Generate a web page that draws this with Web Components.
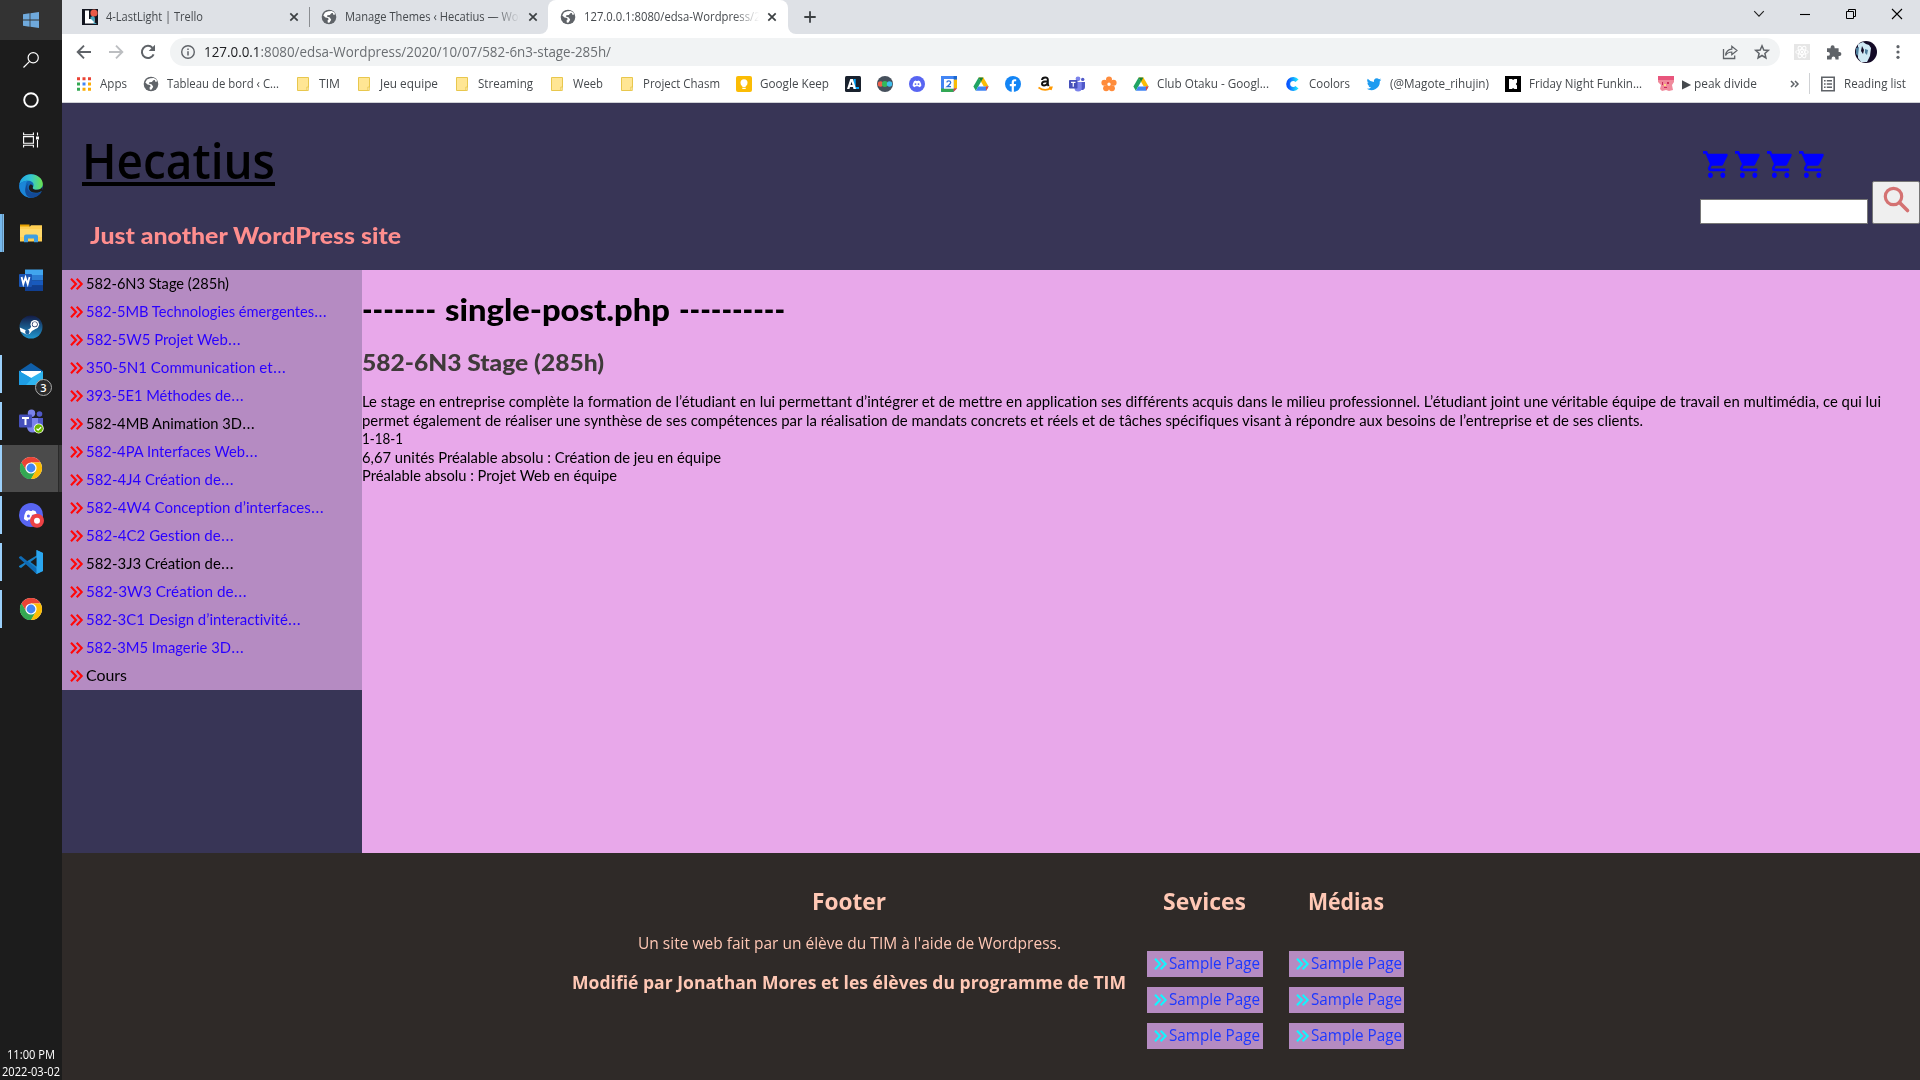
<!DOCTYPE html>
<html lang="fr">
<head>
<meta charset="utf-8">
<title>582-6N3 Stage (285h)</title>
<style>
html,body{margin:0;padding:0;width:1920px;height:1080px;overflow:hidden;background:#2f2a28}
body{font-family:"Open Sans","Noto Sans",sans-serif}
</style>
</head>
<body>
<desk-screen></desk-screen>
<script>
const define = (name, html, ready) => customElements.define(name, class extends HTMLElement {
  constructor(){
    super();
    const t = document.createElement('template');
    t.innerHTML = html;
    this.attachShadow({mode:'open'}).append(t.content.cloneNode(true));
  }
  connectedCallback(){ if (ready) ready.call(this, this.shadowRoot); }
});

/* Text run stretched to an exact advance width (attribute w). */
define('fit-text', `<style>
:host{display:block;white-space:nowrap;flex:none}
span{display:inline-block;transform-origin:0 50%;white-space:nowrap;text-decoration:inherit}
</style><span><slot></slot></span>`, function(root){
  const w = +this.getAttribute('w');
  if (!w) return;
  this.style.width = w + 'px';
  const s = root.querySelector('span');
  const n = s.offsetWidth ? s.getBoundingClientRect().width : 0;
  if (n) s.style.transform = `scaleX(${(w / n).toFixed(4)})`;
});

const chrome = `<circle cx="12" cy="12" r="11" fill="#fff"/><path d="M12 12 2.47 6.5A11 11 0 0 1 21.53 6.5L12 6.5Z" fill="#ea4335"/><path d="M2.47 6.5A11 11 0 0 0 12 23L16.8 14.7 12 17.5 7.2 14.8Z" fill="#34a853"/><path d="M2.47 6.5 7.2 14.8 12 12V6.5Z" fill="#ea4335"/><path d="M2.47 6.5 7.2 14.8 12 17.5 16.8 14.7 12 23A11 11 0 0 1 2.47 6.5Z" fill="#34a853"/><path d="M12 6.5H21.53A11 11 0 0 1 12 23L16.8 14.7Z" fill="#fbbc04"/><circle cx="12" cy="12" r="5.6" fill="#fff"/><circle cx="12" cy="12" r="4.4" fill="#4285f4"/>`;
const globe = `<circle cx="8" cy="8" r="7.3" fill="#5f6368"/><path d="M7.2 2.2 4 3.6 2.3 6.4 4.5 8.6l2.7.3.3 1.8-1 .8.4 2.2 1.7-.2 1.6-2.7-1.4-2.3-3-1 .6-1.3 2.5-.3 1.3-1.6 1.7-.2.4 1.6 2-.1-1-2.2L10.700 2z" fill="#fff"/>`;
const drive = `<path d="M5.6 1.500h4.800L15.600 10.500H10.800z" fill="#fbbc04"/><path d="M5.600 1.500 8 5.700 2.800 14.700.4 10.500z" fill="#1fa463"/><path d="M5.200 10.500H15.600L13.200 14.700H2.800z" fill="#4285f4"/><path d="m12.800 10.500h2.800l-2.400 4.200z" fill="#ea4335"/><path d="M5.600 1.500h4.800L8 5.700z" fill="#188038"/>`;
const discordFace = `<path d="M5 5.200Q6.200 4.500 7 4.500l.3.500h1.400l.3-.5q.8 0 2 .7 1.400 2.400 1.300 4.800-1 .9-2.300 1.200l-.6-.9H6.600l-.6.9Q4.700 10.900 3.700 10 3.600 7.600 5 5.200z" fill="#fff"/><circle cx="6.500" cy="8.100" r=".95" fill="#5865f2"/><circle cx="9.500" cy="8.100" r=".95" fill="#5865f2"/>`;
const ICONS = {
  windows:[16,16,`<path d="M0 2.300 6.600 1.300V7.600H0zM7.400 1.200 16 0V7.600H7.400zM0 8.400H6.600V14.700L0 13.700zM7.400 8.400H16V16L7.400 14.800z" fill="#6fa9dc"/>`],
  search:[16,16,`<g fill="none" stroke="#fff" stroke-width="1.200"><circle cx="10.200" cy="5.800" r="5.100"/><path d="M6.600 9.400.5 15.500"/></g>`],
  cortana:[16,16,`<circle cx="8" cy="8" r="6.800" fill="none" stroke="#fff" stroke-width="1.900"/>`],
  taskview:[16,16,`<g fill="none" stroke="#fff" stroke-width="1.100"><path d="M.6.500V2.800H10.400V.5M.6 15.500V13.200H10.400V15.500M.6 5V11.200M10.400 5V11.200M0 4.600H11M0 11.200H11M14.500.5V3.500M14.500 8V15.500"/></g><path d="M13 4.500h3v3h-3z" fill="#fff"/>`],
  edge:[24,24,`<defs><linearGradient id="a" x1="0" x2="1"><stop stop-color="#1fa2e6"/><stop offset=".5" stop-color="#36c8d0"/><stop offset="1" stop-color="#6be24b"/></linearGradient></defs><circle cx="12" cy="12" r="11.800" fill="#1267b8"/><path d="M.3 11C1 4.500 6 .2 12 .2c6.500 0 11.800 4.500 11.800 9.800 0 3.500-2.700 5.800-5.800 5.800-3 0-4.400-1-4.400-1.800 0-.6 1-1 1-3 0-2.400-2.200-4.200-5.600-4.200C5 6.800 1.500 8.600.3 11z" fill="url(#a)"/><path d="M.3 11C2 7.800 6 6.700 9 6.800 7 8 6 11 7 14.500c1 4 4.500 6.800 8.500 6.800-1.700 1.300-3 2.400-6 2.200C4 22.300-.3 17 .3 11z" fill="#1b86d8"/><path d="M9.200 9.500c-2 3-.5 7.500 3.300 9 4 1.500 8 .6 10-.8-1.600 3.300-6 6.300-10.500 6-5-.6-6.600-6-5.500-10 .5-2 1.400-3.300 2.700-4.200z" fill="#124a98"/><path d="M13.600 14c0 .8 1.400 1.800 4.400 1.800 2.500 0 4.500-1 5.400-3l-.2 4c-4 3-11.200 2.700-13-1.300-.7-1.700-.4-3.700 1.100-5 2 0 3.500 1.300 2.300 3.500z" fill="#1c1c1c"/>`],
  explorer:[24,24,`<path d="M1 3.500h9.500V7H1z" fill="#e8a200"/><path d="M1 5.500H11l1-1.300H23V20.500H1z" fill="#ffcf53"/><path d="M1 8h22v8H1z" fill="#ffd96b"/><path d="M5 21.300V15.500a2 2 0 0 1 2-2H17a2 2 0 0 1 2 2v5.800H15V17.500H9v3.800z" fill="#3f9ee0"/>`],
  word:[24,24,`<path d="M6 1.500H24V7H6z" fill="#41a5ee"/><path d="M6 7H24v5.500H6z" fill="#2b7cd3"/><path d="M6 12.300H24v5.400H6z" fill="#185abd"/><path d="M6 17.500H24V23H6z" fill="#103f91"/><rect y="6" width="13" height="13" rx="1" fill="#1a55b4"/><path d="m2.600 9 1.700 7 2.200-6.600L8.700 16l1.800-7" fill="none" stroke="#fff" stroke-width="1.800"/>`],
  steam:[24,24,`<defs><linearGradient id="s" x2="0" y2="1"><stop stop-color="#141b45"/><stop offset="1" stop-color="#2096cf"/></linearGradient></defs><circle cx="12" cy="12" r="11.500" fill="url(#s)"/><path d="M.8 12.500 7.500 15.500 11 13.500 14 9l5 3.500-6 3.500-2.500 3L7 19.300 1.500 16.500z" fill="#fff"/><circle cx="15.800" cy="9.300" r="4.300" fill="#fff"/><circle cx="15.800" cy="9.300" r="2.900" fill="#1b2e60"/><circle cx="15.800" cy="9.300" r="2.200" fill="#fff"/><circle cx="8.300" cy="17" r="2.200" fill="#1d5c96"/>`],
  mail:[24,24,`<path d="M0 9 12 1 24 9v3H0z" fill="#0f5ea8"/><path d="M2 9h20v9H2z" fill="#fff"/><path d="M0 9 12 16 24 9V23H0z" fill="#2fb5f0"/><path d="M0 23V9L13 16.500 7 23z" fill="#1e9de4"/>`],
  teams:[24,24,`<circle cx="12.500" cy="4.200" r="3.700" fill="#7b83eb"/><circle cx="20.500" cy="5" r="2.800" fill="#5059c9"/><path d="M17 9h7v7.500a4.500 4.500 0 0 1-7 3.500z" fill="#5059c9"/><path d="M8 9H19v9a5.500 5.500 0 0 1-11 0z" fill="#7b83eb"/><rect y="5.500" width="13" height="13" rx="1" fill="#4650bb"/><path d="M3 9h7M6.500 9v7" stroke="#fff" stroke-width="2"/><circle cx="19.700" cy="19.500" r="5" fill="#fff"/><circle cx="19.700" cy="19.500" r="4.200" fill="#6bb700"/><path d="m17.500 19.600 1.600 1.600 3-3" fill="none" stroke="#fff" stroke-width="1.300"/>`],
  chrome:[24,24,chrome],
  discord:[24,24,`<circle cx="12" cy="12" r="12" fill="#5865f2"/><g transform="translate(-1 0) scale(1.600)">${discordFace}</g><circle cx="18" cy="17.800" r="7" fill="#ed4245"/><circle cx="18" cy="17.800" r="3" fill="#fff"/>`],
  vscode:[24,24,`<path d="M17.500 0 24 3V21L17.500 24 7 14 2 18 0 17V16L17.500 5.500z" fill="#1780c4"/><path d="M0 7 2 6l16 13v5L0 8z" fill="#0f6bb5"/><path d="M17.500 0 24 3V21L17.500 24z" fill="#2ba7f0"/><path d="M17.500 7.500v9L11.500 12z" fill="#1c1c1c"/>`],
  globe:[16,16,globe],
  lastlight:[16,16,`<path d="M0 0h16v16H0z" fill="#12151f"/><path d="M3 1.500h4V10h5.500v4.500H3z" fill="#fff"/><path d="M8 9l3-3 2 3-1 4zM12 13l3 2h-4z" fill="#49a5bd"/><circle cx="12" cy="4" r="3.600" fill="#eb5a46"/>`],
  x:[16,16,`<path d="m4.300 4.300 7.400 7.400m0-7.400-7.400 7.400" stroke="#3c4043" stroke-width="1.700"/>`],
  plus:[16,16,`<path d="M8 2.300v11.400M2.300 8h11.400" stroke="#3c4043" stroke-width="1.800"/>`],
  chev:[16,16,`<path d="m3.200 5.200 4.800 5 4.800-5" fill="none" stroke="#222" stroke-width="1.100"/>`],
  min:[16,16,`<path d="M3 8.500h10" stroke="#000" stroke-width="1.100"/>`],
  restore:[16,16,`<path d="M3.500 5.500h7v7h-7zM5.500 5.500v-2h7v7h-2" fill="none" stroke="#000"/>`],
  close:[16,16,`<path d="m3 3 10 10M13 3 3 13" stroke="#000" stroke-width="1.100"/>`],
  back:[16,16,`<path d="M15 8H2M8 1.700 1.700 8 8 14.300" fill="none" stroke="#5f6368" stroke-width="1.900"/>`],
  fwd:[16,16,`<path d="M1 8h13M8 1.700 14.300 8 8 14.300" fill="none" stroke="#bcbec1" stroke-width="1.900"/>`],
  reload:[16,16,`<path d="M13.600 10.300A6.100 6.100 0 1 1 12.500 3.800" fill="none" stroke="#5f6368" stroke-width="2"/><path d="M15 .7V7H8.700z" fill="#5f6368"/>`],
  info:[16,16,`<circle cx="8" cy="8" r="6.300" fill="none" stroke="#5f6368" stroke-width="1.400"/><path d="M8 7.200v4.200M8 4.400v1.500" stroke="#5f6368" stroke-width="1.500"/>`],
  share:[16,16,`<path d="M1.500 5v9.500h11.200V11.500" fill="none" stroke="#5f6368" stroke-width="1.300"/><path d="M3.600 11.500C4 7.600 6 5.500 9.800 5.200V2.200L15 6.500 9.800 10.700V8C7 8 5 9.200 3.600 11.500z" fill="none" stroke="#5f6368" stroke-width="1.200"/>`],
  star:[16,16,`<path d="m8 1.800 1.800 4.200 4.500.4-3.400 3 1 4.500L8 11.500l-3.900 2.400 1-4.500-3.400-3L6.200 6z" fill="none" stroke="#5f6368" stroke-width="1.500"/>`],
  react:[16,16,`<path d="M0 0h16v16H0z" fill="#e6e6e6"/><g fill="none" stroke="#fff"><ellipse cx="8" cy="8" rx="6.300" ry="2.400"/><ellipse cx="8" cy="8" rx="6.300" ry="2.400" transform="rotate(60 8 8)"/><ellipse cx="8" cy="8" rx="6.300" ry="2.400" transform="rotate(120 8 8)"/></g><circle cx="8" cy="8" r="1.200" fill="#fff"/>`],
  puzzle:[16,16,`<path d="M1 4.200h3.600V3.200a2 2 0 0 1 4 0v1H12.600V8h.8a2 2 0 0 1 0 4h-.8v3.500H9.400v-1a1.900 1.900 0 0 0-3.800 0v1H1V11.800h1a1.900 1.900 0 0 0 0-3.800H1z" fill="#5f6368"/>`],
  avatar:[22,22,`<defs><clipPath id="c"><circle cx="11" cy="11" r="11"/></clipPath></defs><g clip-path="url(#c)"><path d="M0 0h22v22H0z" fill="#130a26"/><path d="M3 3 8 1l3 2 3 1 2 3-1 8-3 6H6L3 17l0-8z" fill="#cfe9f5"/><path d="M1 7l3-1-1 9-2-2zM10 8l3 1-1 5-2-2z" fill="#4e7f9d"/><path d="M7 5l2 4-1 4-2-3z" fill="#130a26"/></g>`],
  dots:[16,16,`<g fill="#5f6368"><circle cx="8" cy="2.700" r="1.600"/><circle cx="8" cy="8" r="1.600"/><circle cx="8" cy="13.300" r="1.600"/></g>`],
  apps:[16,16,`<g fill="#ea4335"><path d="M1 1.300h3v3H1zM6.500 1.300h3v3h-3zM12 1.300h3v3h-3z"/></g><path d="M1 6.500h3v3H1zM1 11.700h3v3H1z" fill="#34a853"/><path d="M6.500 6.500h3v3h-3z" fill="#4285f4"/><path d="M12 6.500h3v3h-3zM6.500 11.700h3v3h-3zM12 11.700h3v3h-3z" fill="#fbac04"/>`],
  folder:[16,16,`<path d="M2.500 1.500H13.500V11l-.7 1v2.500H2.500z" fill="#ffe694" stroke="#e8c74d"/><path d="M11.800 11h1.500v3.500h-1.500z" fill="#fff0b8" stroke="#e8c74d" stroke-width=".8"/>`],
  keep:[16,16,`<rect width="16" height="16" rx="2" fill="#fbbc04"/><circle cx="8" cy="6.800" r="3.500" fill="#fff"/><path d="M6.300 9h3.400v2H6.300zM6.300 11.700h3.400v1.200H6.300z" fill="#fff"/>`],
  anilist:[16,16,`<rect width="16" height="16" rx="1.500" fill="#19212d"/><path d="M8.500 3h2.200v8H14v2H8.500z" fill="#02a9ff"/><path fill-rule="evenodd" d="M2 13 5.300 3h2.600L11 13H8.600L8 11H5l-.6 2zM5.600 9h1.900L6.500 5.800z" fill="#fff"/>`],
  ovals:[16,16,`<circle cx="8" cy="8" r="8" fill="#46505c"/><circle cx="3.500" cy="8" r="2.700" fill="#f0604c"/><circle cx="7.800" cy="8" r="2.900" fill="#33b85a"/><circle cx="12.500" cy="8" r="2.700" fill="#3fc0f0"/>`],
  discordS:[16,16,`<circle cx="8" cy="8" r="8" fill="#5865f2"/>${discordFace}`],
  cal:[16,16,`<path d="M0 0h16v16H0z" fill="#4285f4"/><path d="M12.600 3.400H16V12.600H12.600z" fill="#fbbc04"/><path d="M0 12.600h12.600V16H1.500A1.500 1.500 0 0 1 0 14.500z" fill="#34a853"/><path d="M12.600 12.600H16L12.600 16z" fill="#ea4335"/><path d="M16 12.600V16H12.600z" fill="#fff"/><path d="M12.600 0H16V3.400H12.600z" fill="#1967d2"/><path d="M3 3h9.700v9.700H3z" fill="#fff"/><path d="M5.800 6.300Q6 4.800 7.800 4.800T9.700 6.500Q9.700 7.600 6 10.700H10" fill="none" stroke="#2a6fdb" stroke-width="1.300"/>`],
  drive:[16,16,drive],
  fb:[16,16,`<circle cx="8" cy="8" r="8" fill="#1385f5"/><path d="M6.700 16V10.300H4.800V8h1.900V6.300C6.700 4.200 8 3.200 9.600 3.200l1.600.1v2H10c-.8 0-1.100.4-1.100 1.100V8h2.200l-.4 2.300H8.900V16z" fill="#fff"/>`],
  amazon:[16,16,`<path d="M5 4Q5.300 1.500 8.200 1.500T10.800 4V8.500L11.700 10M10.700 5.200Q5 5 5 7.800 5 9.500 7 9.500 10.700 9.300 10.700 5.800" fill="none" stroke="#111" stroke-width="2"/><path d="M1.500 11.500Q8 16 14 12M12 11.300h2.800L13.800 14" fill="none" stroke="#f90" stroke-width="1.600"/>`],
  teamsS:[16,16,`<circle cx="9" cy="2.800" r="2.400" fill="#7b83eb"/><circle cx="13.700" cy="3.400" r="1.700" fill="#5059c9"/><path d="M12 6h4v5a3 3 0 0 1-4 2.800z" fill="#5059c9"/><path d="M5.500 6h7.200v6a3.600 3.600 0 0 1-7.200 0z" fill="#7b83eb"/><rect y="4" width="8.500" height="8.500" rx=".8" fill="#4650bb"/><path d="M2 6.300h4.500M4.250 6.300v4.500" stroke="#fff" stroke-width="1.200"/>`],
  flower:[16,16,`<g fill="#ff8c3c"><circle cx="8" cy="3.400" r="3"/><circle cx="12.600" cy="6.700" r="3"/><circle cx="10.900" cy="12.200" r="3"/><circle cx="5.100" cy="12.200" r="3"/><circle cx="3.400" cy="6.700" r="3"/></g><circle cx="8" cy="8.200" r="2.400" fill="#fff" stroke="#ff8c3c" stroke-width="1.400"/>`],
  coolors:[16,16,`<defs><linearGradient id="k" x2="1"><stop stop-color="#0a55ff"/><stop offset="1" stop-color="#1ce0ff"/></linearGradient></defs><path d="M12 4.800A5 5 0 1 0 12 11.200" fill="none" stroke="url(#k)" stroke-width="4"/>`],
  twitter:[16,16,`<path d="M15.300 3.700a6 6 0 0 1-1.700.5 3 3 0 0 0 1.300-1.700 6 6 0 0 1-1.900.7A3 3 0 0 0 7.900 6 8.500 8.500 0 0 1 1.700 2.800a3 3 0 0 0 .9 4 3 3 0 0 1-1.300-.4 3 3 0 0 0 2.400 3 3 3 0 0 1-1.400 0 3 3 0 0 0 2.800 2.100A6 6 0 0 1 .7 12.800 8.500 8.500 0 0 0 13.800 5.200a6 6 0 0 0 1.500-1.500z" fill="#1d9bf0"/>`],
  fnf:[16,16,`<path d="M0 0h16v16H0z" fill="#000"/><path d="M4 3h3l1 1 1.500-1H12v3.500L10.800 8 12 9.500V13H9.500L8 12 7 13H4z" fill="#fff"/>`],
  pink:[16,16,`<path d="M0 0h16v6l-2 3 1 5-4 1-3-1-4 1-2-2 1-4-3-3z" fill="#f08a9c"/><path d="M0 0h16v4H0z" fill="#e8557c"/><path d="M4 6h1v3H4zM9 6h2v2H9zM6 11h3v1H6z" fill="#c92e5c"/><path d="M6 8h2v2H6z" fill="#ffd980"/>`],
  list:[16,16,`<path d="M1.800 1.300h12.400v13.400H1.800z" fill="none" stroke="#5f6368" stroke-width="1.600"/><path d="M4 4.800h1.600M4 8h1.600M4 11.200h1.600M6.800 4.800H12M6.800 8H12M6.800 11.200H12" stroke="#5f6368" stroke-width="1.400"/>`],
  more:[16,16,`<path d="m4 5 3 3-3 3M8 5l3 3-3 3" fill="none" stroke="#5f6368" stroke-width="1.500"/>`],
  dbl:[13,12,`<path d="m1 .8 5 5.200-5 5.200M6.700.8l5 5.200-5 5.200" fill="none" stroke="currentColor" stroke-width="2.100"/>`],
  cart:[26,27,`<svg width="26" height="27" viewBox="1 2 21 20" preserveAspectRatio="none"><path d="M7 18c-1.100 0-1.990.9-1.990 2S5.900 22 7 22s2-.9 2-2-.9-2-2-2zM1 2v2h2l3.600 7.590-1.350 2.450c-.16.280-.25.610-.25.960 0 1.100.9 2 2 2h12v-2H7.420c-.14 0-.25-.11-.25-.25l.03-.12.900-1.630h7.450c.75 0 1.410-.41 1.750-1.030l3.580-6.490c.08-.14.12-.31.12-.48 0-.55-.45-1-1-1H5.210l-.94-2H1zm16 16c-1.100 0-1.990.9-1.990 2s.89 2 1.990 2 2-.9 2-2-.9-2-2-2z" fill="#00f"/></svg>`],
  loupe:[28,28,`<g fill="none" stroke="#d47272"><circle cx="10.500" cy="10.500" r="8.200" stroke-width="3.200"/><path d="m16.500 16.500 8 8" stroke-width="3.600" stroke-linecap="round"/></g>`],
};
define('ui-icon', `<style>:host{display:block;flex:none;line-height:0}</style>`, function(root){
  const icon = ICONS[this.getAttribute('n')];
  if (!icon || root.querySelector('div')) return;
  const [w,h,body] = icon;
  const d = document.createElement('div');
  d.innerHTML = `<svg width="${w}" height="${h}" viewBox="0 0 ${w} ${h}" style="display:block;overflow:visible">${body}</svg>`;
  root.append(d);
});

define('task-item', `<style>
:host{display:flex;box-sizing:border-box;position:relative;align-items:center;justify-content:center;height:47px;width:62px;padding-bottom:2px;flex:none}
:host([small]){height:40px;padding-bottom:0}
:host([start]){background:#333}
:host([active]){background:linear-gradient(90deg,#4b4b4b 0 58px,#2a2a2a 58px 59px,#3a3a3a 59px)}
i{position:absolute;left:0;top:4px;width:2px;height:38px;background:#9bd0fb;display:none}
:host([open]) i{display:block}
:host([multi]) i{width:4px;background:linear-gradient(90deg,#76b9ed 0 2px,#5f91b9 2px 3px,#82bce8 3px)}
:host([active]) i{top:0;height:47px}
b{position:absolute;left:35px;top:28px;width:15px;height:15px;border-radius:50%;background:#2b2b2b;border:1px solid #aaa;color:#fff;font:600 11px/15px "Open Sans",sans-serif;text-align:center}
b:empty{display:none}
</style><i></i><ui-icon></ui-icon><b></b>`, function(root){
  const old = root.querySelector('ui-icon'), ic = document.createElement('ui-icon');
  ic.setAttribute('n', this.getAttribute('icon'));
  old.replaceWith(ic);
  root.querySelector('b').textContent = this.getAttribute('badge') || '';
});

define('task-bar', `<style>
:host{display:flex;flex-direction:column;width:62px;height:1080px;background:#1c1c1c;flex:none}
.g{height:3px;flex:none}.f{flex:1}
.c{display:flex;flex-direction:column;align-items:center;color:#fff;font:12px/17px "Open Sans",sans-serif}
</style>
<task-item small start icon="windows"></task-item><task-item small icon="search"></task-item><task-item small icon="cortana"></task-item><task-item small icon="taskview"></task-item>
<div class="g"></div>
<task-item icon="edge"></task-item><task-item open multi icon="explorer"></task-item><task-item icon="word"></task-item><task-item icon="steam"></task-item>
<task-item open icon="mail" badge="3"></task-item><task-item open icon="teams"></task-item><task-item open active icon="chrome"></task-item>
<task-item open icon="discord"></task-item><task-item open icon="vscode"></task-item><task-item open icon="chrome"></task-item>
<div class="f"></div>
<div class="c"><fit-text w="48">11:00 PM</fit-text><fit-text w="58">2022-03-02</fit-text></div>`);

define('browser-tab', `<style>
:host{display:flex;align-items:center;height:34px;box-sizing:border-box;color:#45494d;font-size:12px;line-height:16px;flex:none}
.t{margin-left:8px;overflow:hidden;flex:none}
:host([fade]) .t{-webkit-mask-image:linear-gradient(90deg,#000 calc(100% - 26px),transparent)}
ui-icon:last-child{margin-left:auto}
:host([on]){background:#fff;border-radius:8px 8px 0 0}
</style><ui-icon></ui-icon><div class="t"><slot></slot></div><ui-icon n="x"></ui-icon>`, function(root){
  const ic = document.createElement('ui-icon'); ic.setAttribute('n', this.getAttribute('icon'));
  root.querySelector('ui-icon').replaceWith(ic);
  root.querySelector('.t').style.width = this.getAttribute('tw') + 'px';
});

define('tab-strip', `<style>
:host{display:flex;height:34px;background:#dee1e6;flex:none}
.l{flex:none;width:486px;display:flex;align-items:center;background:#dee1e6;border-bottom-right-radius:8px}
.w{background:linear-gradient(#dee1e6 50%,#fff 50%);display:flex}
.s{width:1px;height:20px;background:#8a8d91;flex:none}
.r{flex:1;display:flex;background:#dee1e6;border-bottom-left-radius:8px;align-items:center}
.r ui-icon:first-child{margin-left:14px}
.c{margin-left:auto;margin-right:15px;display:flex;gap:30px;padding-bottom:6px}
.a{padding:0 7px 0 20px;width:247px}.b{padding:0 7px 0 11px;width:238px}.d{padding:0 8px 0 12px;width:240px}
</style>
<div class="w"><div class="l">
<browser-tab class="a" icon="lastlight" tw="160"><fit-text w="97">4-LastLight | Trello</fit-text></browser-tab><div class="s"></div>
<browser-tab class="b" icon="globe" tw="175" fade><fit-text w="213">Manage Themes ‹ Hecatius — WordPress</fit-text></browser-tab></div>
<browser-tab class="d" on icon="globe" tw="175" fade><fit-text w="196">127.0.0.1:8080/edsa-Wordpress/2020</fit-text></browser-tab></div>
<div class="w" style="flex:1"><div class="r"><ui-icon n="plus"></ui-icon><div class="c"><ui-icon n="chev"></ui-icon><ui-icon n="min"></ui-icon><ui-icon n="restore"></ui-icon><ui-icon n="close"></ui-icon></div></div></div>`);

define('tool-bar', `<style>
:host{display:flex;align-items:center;height:36px;background:#fff;flex:none;padding-left:14px;gap:16px;box-sizing:border-box}
.p{display:flex;align-items:center;width:1610px;height:28px;border-radius:14px;background:#f1f3f4;box-sizing:border-box;padding:0 10px;margin-left:-2px;font-size:14px;line-height:20px;color:#6a6e72}
.p fit-text{margin-left:8px}.p em{font-style:normal;color:#202124}
.e{display:flex;gap:16px;margin-left:auto}
.x{display:flex;align-items:center;gap:13px;margin-left:-2px}
</style>
<ui-icon n="back"></ui-icon><ui-icon n="fwd"></ui-icon><ui-icon n="reload"></ui-icon>
<div class="p"><ui-icon n="info"></ui-icon><fit-text w="407"><em>127.0.0.1</em>:8080/edsa-Wordpress/2020/10/07/582-6n3-stage-285h/</fit-text><div class="e"><ui-icon n="share"></ui-icon><ui-icon n="star"></ui-icon></div></div>
<div class="x"><ui-icon n="react"></ui-icon><ui-icon n="puzzle" style="margin-left:3px"></ui-icon><ui-icon n="avatar"></ui-icon><ui-icon n="dots"></ui-icon></div>`);

define('book-mark', `<style>:host{display:flex;align-items:center;gap:8px;flex:none}</style><slot></slot>`);
const bm = (n,t,w) => `<book-mark><ui-icon n="${n}"></ui-icon>${t?`<fit-text w="${w}">${t}</fit-text>`:''}</book-mark>`;
define('bookmark-bar', `<style>
:host{display:flex;align-items:center;height:33px;background:#fff;border-bottom:1px solid #cfd1d6;box-sizing:border-box;padding:0 14px 5px 14px;gap:16px;font-size:12px;line-height:16px;color:#45494d;flex:none}
.e{margin-left:auto;display:flex;align-items:center;gap:10px}.s{width:1px;height:21px;background:#cfd1d4;margin-left:-4px}
</style>
${bm('apps','Apps',27)}${bm('globe','Tableau de bord ‹ C...',112)}${bm('folder','TIM',21)}${bm('folder','Jeu equipe',58)}${bm('folder','Streaming',55)}${bm('folder','Weeb',30)}${bm('folder','Project Chasm',77)}${bm('keep','Google Keep',69)}
${['anilist','ovals','discordS','cal','drive','fb','amazon','teamsS','flower'].map(n=>bm(n)).join('')}
${bm('drive','Club Otaku - Googl...',112)}${bm('coolors','Coolors',41)}${bm('twitter','(@Magote_rihujin)',99)}${bm('fnf','Friday Night Funkin...',113)}${bm('pink','▶ peak divide',75)}
<div class="e"><ui-icon n="more"></ui-icon><div class="s"></div><book-mark><ui-icon n="list"></ui-icon><fit-text w="62">Reading list</fit-text></book-mark></div>`);

define('site-header', `<style>
:host{display:flex;justify-content:space-between;height:167px;background:#383556;box-sizing:border-box;flex:none}
.t{padding:30px 0 0 20px}
.h{font:600 48px/56px "Open Sans",sans-serif;color:#000;text-decoration:underline 4px;text-underline-offset:3px;text-decoration-skip-ink:none}
.s{font:900 23px/30px Lato,sans-serif;color:#ff8e8e;margin:31px 0 0 8px}
.r{width:220px;padding-top:48px}
.c{display:flex;gap:6px;padding-left:3px}
.f{display:flex;align-items:flex-end;gap:4px;margin-top:3px}
.i{width:168px;height:25px;background:#fff;border:1px solid #767676;box-sizing:border-box}
.b{width:48px;height:43px;background:#efefef;border:1px solid #767676;border-radius:2px;box-sizing:border-box;padding:4px 0 0 10px}
</style>
<div class="t"><fit-text class="h" w="193">Hecatius</fit-text><fit-text class="s" w="311">Just another WordPress site</fit-text></div>
<div class="r"><div class="c">${'<ui-icon n="cart"></ui-icon>'.repeat(4)}</div><div class="f"><div class="i"></div><div class="b"><ui-icon n="loupe"></ui-icon></div></div></div>`);

define('course-link', `<style>
:host{display:flex;align-items:center;height:28px;padding:0 0 2px 8px;box-sizing:border-box;font:15px/26px Lato,sans-serif;font-variant-ligatures:none;color:#2a00ff}
:host([cur]){color:#000}
ui-icon{color:#ff0808;margin:1px 3px 0 0}
</style><ui-icon n="dbl"></ui-icon><slot></slot>`);
const courses = [['582-6N3 Stage (285h)',143,1],['582-5MB Technologies émergentes…',241],['582-5W5 Projet Web…',155],['350-5N1 Communication et…',200],['393-5E1 Méthodes de…',158],['582-4MB Animation 3D…',169,1],['582-4PA Interfaces Web…',172],['582-4J4 Création de…',148],['582-4W4 Conception d’interfaces…',238],['582-4C2 Gestion de…',148],['582-3J3 Création de…',148,1],['582-3W3 Création de…',161],['582-3C1 Design d’interactivité…',215],['582-3M5 Imagerie 3D…',158],['Cours',41,1]];
const dots = t => t.replace('…','<span style="font-family:Open Sans,sans-serif;font-size:17px;line-height:0">…</span>');
define('course-menu', `<style>:host{display:block;width:300px;background:#383556;flex:none}div{background:#b58bc2;height:420px}</style>
<div>${courses.map(([t,w,c])=>`<course-link ${c?'cur':''}><fit-text w="${w}">${dots(t)}</fit-text></course-link>`).join('')}</div>`);

define('post-article', `<style>
:host{display:block;flex:1;background:#e8a8ea;padding-top:21px;box-sizing:border-box;font-family:Lato,sans-serif;font-variant-ligatures:none;color:#000}
.h{display:flex;gap:9px;font-weight:900;font-size:30px;line-height:36px}
.t{font-weight:900;font-size:23px;line-height:28px;color:#3f3a3a;margin-top:21px}
.p{font-size:15px;line-height:18.5px;margin-top:16px}
</style>
<div class="h"><fit-text w="74">-------</fit-text><fit-text w="225">single-post.php</fit-text><fit-text w="106">----------</fit-text></div>
<fit-text class="t" w="242">582-6N3 Stage (285h)</fit-text>
<div class="p"><fit-text w="1519">Le stage en entreprise complète la formation de l’étudiant en lui permettant d’intégrer et de mettre en application ses différents acquis dans le milieu professionnel. L’étudiant joint une véritable équipe de travail en multimédia, ce qui lui</fit-text>
<fit-text w="1281">permet également de réaliser une synthèse de ses compétences par la réalisation de mandats concrets et réels et de tâches spécifiques visant à répondre aux besoins de l’entreprise et de ses clients.</fit-text>
<fit-text w="41">1-18-1</fit-text><fit-text w="359">6,67 unités Préalable absolu : Création de jeu en équipe</fit-text><fit-text w="255">Préalable absolu : Projet Web en équipe</fit-text></div>`);

define('page-link', `<style>
:host{display:flex;align-items:center;height:26px;background:#b58bc2;box-sizing:border-box;padding:0 0 2px 7px;font:16px/22px "Open Sans",sans-serif;color:#1c38ff}
ui-icon{color:#14f5ff;margin:1px 2px 0 0}
</style><ui-icon n="dbl"></ui-icon><fit-text w="91">Sample Page</fit-text>`);
define('link-column', `<style>
:host{display:flex;flex-direction:column;align-items:stretch;flex:none}
.h{display:flex;justify-content:center;font-weight:700;font-size:24px;line-height:28px;margin-bottom:36px;padding-right:2px}
.l{display:flex;flex-direction:column;gap:10px}
</style><div class="h"><slot></slot></div><div class="l"><page-link></page-link><page-link></page-link><page-link></page-link></div>`);
define('site-footer', `<style>
:host{display:flex;height:227px;background:#2f2a28;color:#ffc8b5;padding:34px 0 0 509px;box-sizing:border-box;flex:none;font-family:"Open Sans",sans-serif}
.m{width:556px;display:flex;flex-direction:column;align-items:center;margin-right:20px;flex:none}
.h{font-weight:700;font-size:24px;line-height:28px}
.p{font-size:16px;line-height:20px;margin-top:18px}
.b{font-weight:700;font-size:18.500px;line-height:24px;margin-top:17px}
.c1{width:116px;margin-right:26px}.c2{width:115px}
</style>
<div class="m"><fit-text class="h" w="74">Footer</fit-text><fit-text class="p" w="423">Un site web fait par un élève du TIM à l'aide de Wordpress.</fit-text><fit-text class="b" w="554">Modifié par Jonathan Mores et les élèves du programme de TIM</fit-text></div>
<link-column class="c1"><fit-text w="83">Sevices</fit-text></link-column><link-column class="c2"><fit-text w="76">Médias</fit-text></link-column>`);

define('desk-screen', `<style>
:host{display:flex;width:1920px;height:1080px;overflow:hidden}
.w{display:flex;flex-direction:column;width:1858px;flex:none}
.m{display:flex;height:583px;flex:none}
</style><task-bar></task-bar>
<div class="w"><tab-strip></tab-strip><tool-bar></tool-bar><bookmark-bar></bookmark-bar><site-header></site-header><div class="m"><course-menu></course-menu><post-article></post-article></div><site-footer></site-footer></div>`);
</script>
</body>
</html>
